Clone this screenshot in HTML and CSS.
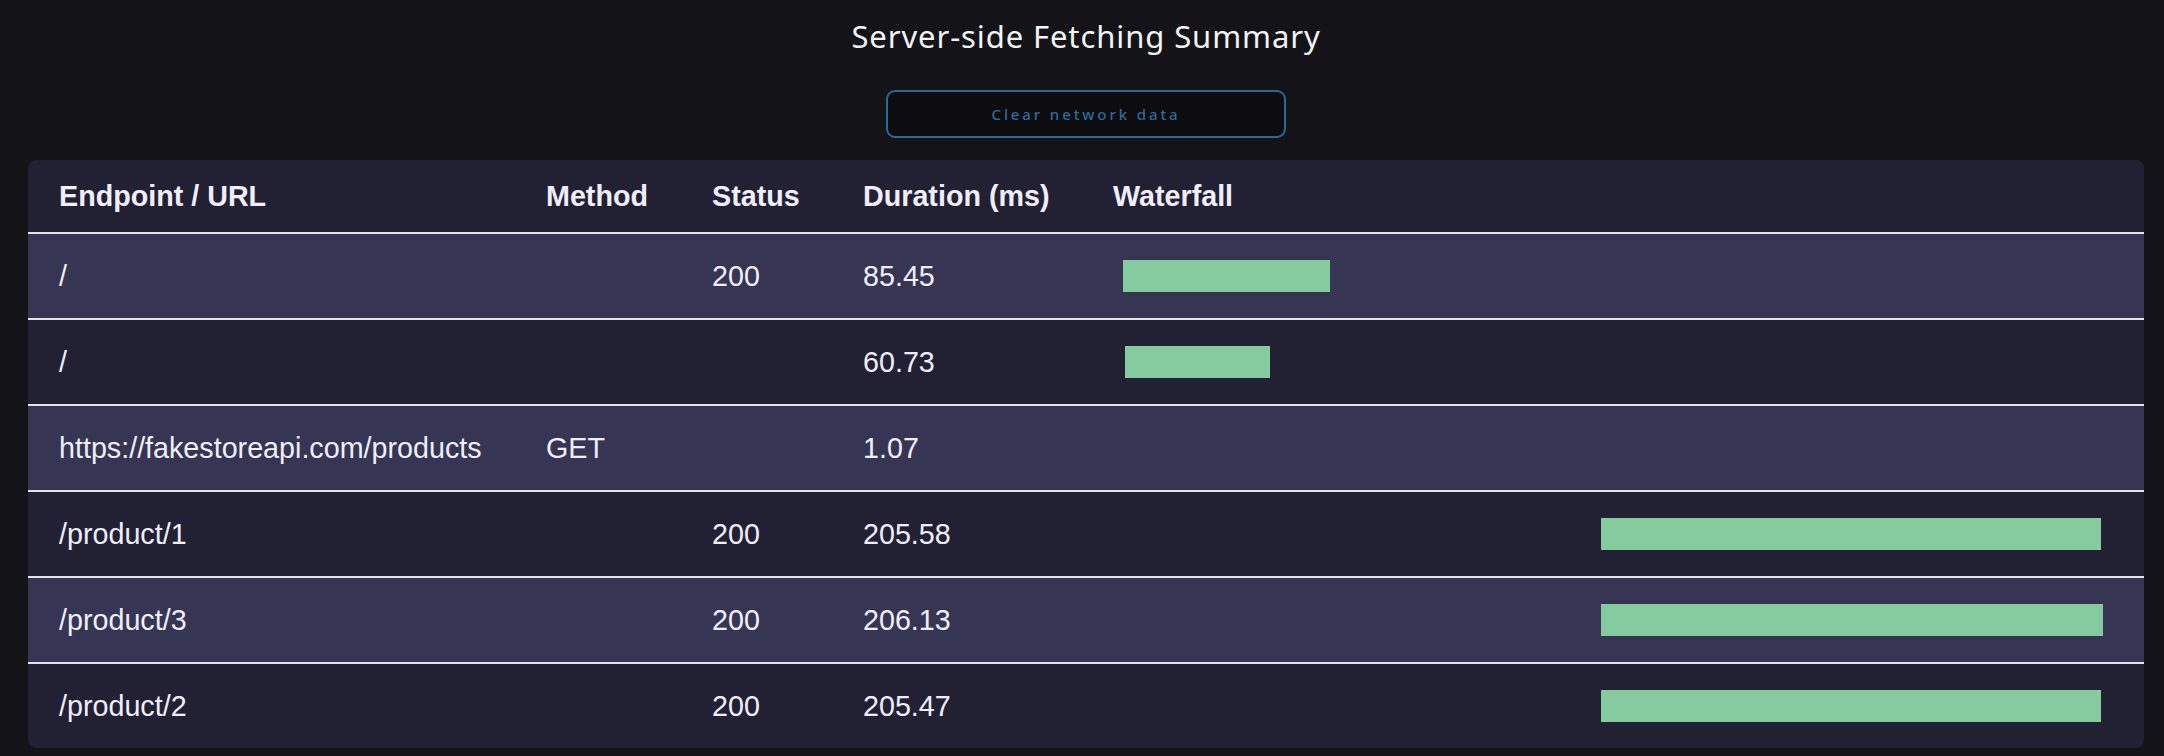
FILE: index.html
```html
<!DOCTYPE html>
<html lang="en">
<head>
<meta charset="utf-8">
<title>Server-side Fetching Summary</title>
<link rel="stylesheet" href="styles.css">
</head>
<body>
<main class="page">
  <h1 class="title">Server-side Fetching Summary</h1>
  <div class="actions">
    <button class="clear-btn" type="button">Clear network data</button>
  </div>
  <div class="panel">
    <table class="summary">
      <colgroup>
        <col class="c-url">
        <col class="c-method">
        <col class="c-status">
        <col class="c-duration">
        <col class="c-waterfall">
      </colgroup>
      <thead>
        <tr>
          <th>Endpoint / URL</th>
          <th>Method</th>
          <th>Status</th>
          <th>Duration (ms)</th>
          <th>Waterfall</th>
        </tr>
      </thead>
      <tbody>
        <tr class="alt">
          <td>/</td><td></td><td>200</td><td>85.45</td>
          <td><div class="bar" style="margin-left:10px;width:207px"></div></td>
        </tr>
        <tr>
          <td>/</td><td></td><td></td><td>60.73</td>
          <td><div class="bar" style="margin-left:12px;width:145px"></div></td>
        </tr>
        <tr class="alt">
          <td>https://fakestoreapi.com/products</td><td>GET</td><td></td><td>1.07</td>
          <td></td>
        </tr>
        <tr>
          <td>/product/1</td><td></td><td>200</td><td>205.58</td>
          <td><div class="bar" style="margin-left:488px;width:500px"></div></td>
        </tr>
        <tr class="alt">
          <td>/product/3</td><td></td><td>200</td><td>206.13</td>
          <td><div class="bar" style="margin-left:488px;width:502px"></div></td>
        </tr>
        <tr>
          <td>/product/2</td><td></td><td>200</td><td>205.47</td>
          <td><div class="bar" style="margin-left:488px;width:500px"></div></td>
        </tr>
      </tbody>
    </table>
  </div>
</main>
</body>
</html>
```

FILE: styles.css
```css
html, body {
  margin: 0;
  padding: 0;
  background: #131318;
}

.page {
  margin: 0 20px 0 28px;
  display: flex;
  flex-direction: column;
  align-items: stretch;
}

.title {
  margin: 0;
  padding-top: 14px;
  font-family: "Noto Sans", "DejaVu Sans", sans-serif;
  font-weight: 400;
  font-size: 31px;
  line-height: 45px;
  letter-spacing: 0.9px;
  color: #f4f4f6;
  text-align: center;
}

.actions {
  display: flex;
  justify-content: center;
  padding-top: 31px;
  padding-bottom: 22px;
}

.clear-btn {
  width: 400px;
  height: 48px;
  box-sizing: border-box;
  background: #0d0d0f;
  border: 2px solid #2b6898;
  border-radius: 9px;
  color: #2d6b9f;
  font-family: "Noto Sans", "DejaVu Sans", sans-serif;
  font-size: 15px;
  font-weight: 500;
  letter-spacing: 2.9px;
  cursor: pointer;
}

.panel {
  background: #222133;
  border-radius: 8px;
  overflow: hidden;
}

.summary {
  width: 100%;
  table-layout: fixed;
  border-collapse: collapse;
  font-family: "Liberation Sans", Arial, sans-serif;
  color: #f1eefc;
  font-size: 28.7px;
}

.c-url { width: 487px; }
.c-method { width: 166px; }
.c-status { width: 151px; }
.c-duration { width: 250px; }

.summary th {
  height: 72px;
  padding: 0 0 0 31px;
  text-align: left;
  font-weight: 700;
  border-bottom: 2px solid #e4e4e8;
}

.summary td {
  height: 84px;
  padding: 0 0 0 31px;
  white-space: nowrap;
}

.summary tbody tr + tr td {
  border-top: 2px solid #e4e4e8;
}

.summary tr.alt td {
  background: #363554;
}

.bar {
  height: 32px;
  background: #86cb9f;
}
```
